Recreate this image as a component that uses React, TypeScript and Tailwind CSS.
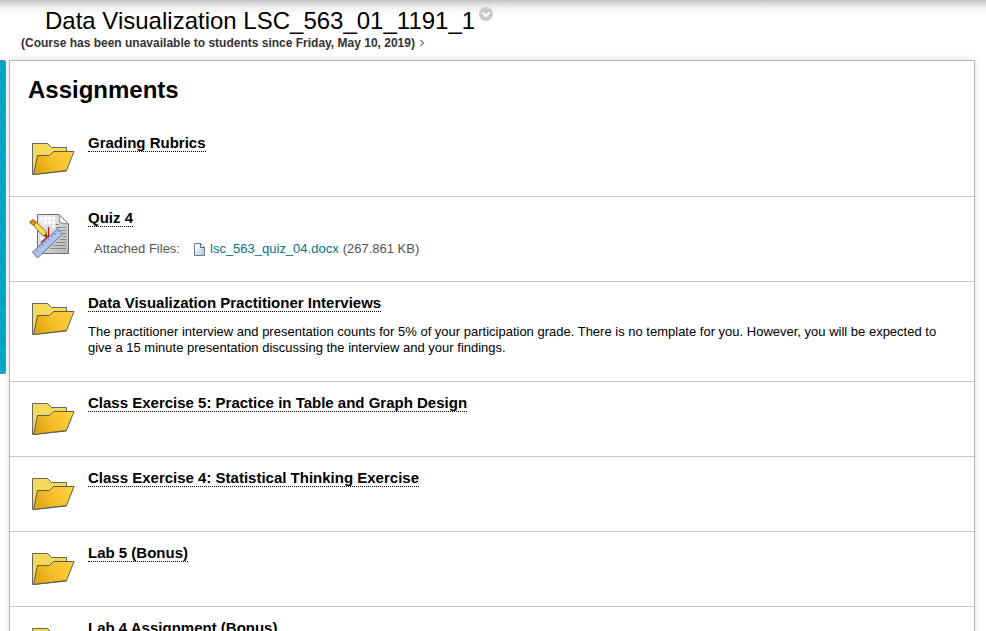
import React from "react";

type Item = {
  title: string;
  kind: "folder" | "assignment";
  height: string;
  description?: string;
  file?: { name: string; size: string };
};

const items: Item[] = [
  { title: "Grading Rubrics", kind: "folder", height: "min-h-[75px]" },
  {
    title: "Quiz 4",
    kind: "assignment",
    height: "min-h-[85px]",
    file: { name: "lsc_563_quiz_04.docx", size: "(267.861 KB)" },
  },
  {
    title: "Data Visualization Practitioner Interviews",
    kind: "folder",
    height: "min-h-[100px]",
    description:
      "The practitioner interview and presentation counts for 5% of your participation grade. There is no template for you. However, you will be expected to give a 15 minute presentation discussing the interview and your findings.",
  },
  { title: "Class Exercise 5: Practice in Table and Graph Design", kind: "folder", height: "min-h-[75px]" },
  { title: "Class Exercise 4: Statistical Thinking Exercise", kind: "folder", height: "min-h-[75px]" },
  { title: "Lab 5 (Bonus)", kind: "folder", height: "min-h-[75px]" },
  { title: "Lab 4 Assignment (Bonus)", kind: "folder", height: "min-h-[75px]" },
];

function FolderIcon() {
  return (
    <svg width="48" height="48" viewBox="0 0 48 48" className="block shrink-0" aria-hidden="true">
      <defs>
        <linearGradient id="folderFront" x1="0" y1="0.6" x2="1" y2="0.3">
          <stop offset="0" stopColor="#dfa514" />
          <stop offset="0.5" stopColor="#f6bf2b" />
          <stop offset="1" stopColor="#ffd23c" />
        </linearGradient>
      </defs>
      <path d="M4.5 39.5V8.5H19.5L23.5 12.5H38.5V36L5.5 39.5Z" fill="#f3d95a" stroke="#666" />
      <path d="M5.5 39.5L9.5 20.5H21.5L25.5 16.5H46L38.5 35.5Z" fill="url(#folderFront)" stroke="#5b5b52" />
    </svg>
  );
}

function AssignmentIcon() {
  return (
    <svg width="48" height="48" viewBox="0 0 48 48" className="block shrink-0" aria-hidden="true">
      <defs>
        <linearGradient id="paper" x1="0" y1="0" x2="1" y2="1">
          <stop offset="0.2" stopColor="#e9e9e9" />
          <stop offset="1" stopColor="#b4b4b4" />
        </linearGradient>
      </defs>
      <path d="M9.5 4.5H31L40.5 14V43.5H9.5Z" fill="url(#paper)" stroke="#6f6f6f" />
      <path d="M31 4.5L32 13L40.5 14Z" fill="#f6f6f6" stroke="#888" />
      <path
        d="M12 7h3v3h-3zM16 7h3v3h-3zM20 7h3v3h-3zM24 7h3v3h-3zM16 11h3v3h-3zM20 11h3v3h-3zM24 11h3v3h-3zM24 15h3v3h-3zM12 23h3v3h-3zM12 27h3v3h-3z"
        fill="#fff"
      />
      <path d="M28 14.5H31M28 17.5H38M33 20.5H38M35 23.5H38M35 26.5H38M32 29.5H38M28 32.5H38M25 35.5H38M22 38.5H38" stroke="#858585" />
      <path d="M20.5 17V27M13 33L20 26" fill="none" stroke="#d31010" strokeWidth="1.3" />
      <path d="M5.5 15.5L8.5 12L18 21.5L18.5 26.5L14 25Z" fill="#ffd84f" stroke="#8a713c" />
      <path d="M1.5 12.5L5 9.5L8.5 12.5L5.5 15.5Z" fill="#f08a25" stroke="#8b5921" />
      <path d="M16 25.5L19 27.5L18.5 23.5Z" fill="#522" />
      <path d="M4.5 42L30 18.5L34.5 24L9.5 48Z" fill="#acc4ee" stroke="#5f6f92" />
      <path
        d="M8 39.5L10 41.5M11 36.5L12.5 38M14 34L16 36M17 31L18.5 32.5M20 28.5L22 30.5M23 25.5L24.5 27M26 23L28 25M29 20.5L30.5 22"
        stroke="#617caf"
      />
    </svg>
  );
}

function FileIcon() {
  return (
    <svg width="12" height="14" viewBox="0 0 12 14" className="block shrink-0" aria-hidden="true">
      <defs>
        <linearGradient id="filePage" x1="0" y1="0" x2="1" y2="1">
          <stop offset="0.2" stopColor="#fff" />
          <stop offset="1" stopColor="#a9bfcb" />
        </linearGradient>
      </defs>
      <path d="M0.5 1.5H7L10.5 5V13.5H0.5Z" fill="url(#filePage)" stroke="#6d7c84" />
      <path d="M6.5 1.5V5.5H10.5" fill="#fff" stroke="#4d5c66" />
    </svg>
  );
}

function ContentItem({ item }: { item: Item }) {
  return (
    <li className={`flex gap-3 border-b border-[#c8c8c8] pt-[13px] pr-9 pl-[18px] ${item.height}`}>
      {item.kind === "folder" ? <FolderIcon /> : <AssignmentIcon />}
      <div className="min-w-0">
        <h2 className="flex text-[15px] leading-4 font-bold">
          <a href="#" className="border-b border-dotted border-black text-black">
            {item.title}
          </a>
        </h2>
        {item.description && <p className="mt-3 text-[13px] leading-4 text-black">{item.description}</p>}
        {item.file && (
          <div className="mt-3 flex items-center pl-[6px] text-[13px] leading-5 text-[#555]">
            <span className="mr-3.5">Attached Files:</span>
            <FileIcon />
            <a href="#" className="ml-1 text-[#00748b]">
              {item.file.name}
            </a>
            <span className="ml-1">{item.file.size}</span>
          </div>
        )}
      </div>
    </li>
  );
}

export default function App() {
  return (
    <div className="flex h-screen flex-col overflow-hidden bg-white font-['Liberation_Sans',Arial,sans-serif]">
      <header className="h-[60px] shrink-0 bg-linear-to-b from-[#c4c4c4] from-0% via-[#ececec] via-10% to-white to-25% pt-2 pl-[21px]">
        <div className="flex items-start gap-1 pl-6">
          <h1 className="text-2xl leading-[26px] text-black">Data Visualization LSC_563_01_1191_1</h1>
          <button type="button" aria-label="Course options" className="-mt-1 block pt-[3px]">
            <svg width="14" height="14" viewBox="0 0 14 14" className="block">
              <circle cx="7" cy="7" r="7" fill="#c9c9c9" />
              <path d="M3.5 5.5L7 9L10.5 5.5" fill="none" stroke="#fff" strokeWidth="2" />
            </svg>
          </button>
        </div>
        <a href="#" className="flex items-center gap-1 text-xs leading-[18px] font-bold text-[#333]">
          (Course has been unavailable to students since Friday, May 10, 2019)
          <svg width="6" height="8" viewBox="0 0 6 8" aria-hidden="true">
            <path d="M1.5 1L4.5 4L1.5 7" fill="none" stroke="#777" strokeWidth="1.3" />
          </svg>
        </a>
      </header>
      <div className="flex items-start gap-[3px] pr-[11px]">
        <button
          type="button"
          aria-label="Show course menu"
          className="h-[314px] w-[6px] shrink-0 rounded-r-xs border-y border-r border-[#6c8b94] bg-[repeating-linear-gradient(45deg,#00a9cb_0px,#00a9cb_7px,#0aa2c1_7px,#0aa2c1_14px)]"
        />
        <main className="min-w-0 flex-1 border border-[#b8b8b8] bg-white shadow-[0_0_6px_rgba(0,0,0,0.15)]">
          <h1 className="px-[18px] pt-4 pb-5 text-2xl leading-[25px] font-bold text-black">Assignments</h1>
          <ul>
            {items.map((item) => (
              <ContentItem key={item.title} item={item} />
            ))}
          </ul>
        </main>
      </div>
    </div>
  );
}
